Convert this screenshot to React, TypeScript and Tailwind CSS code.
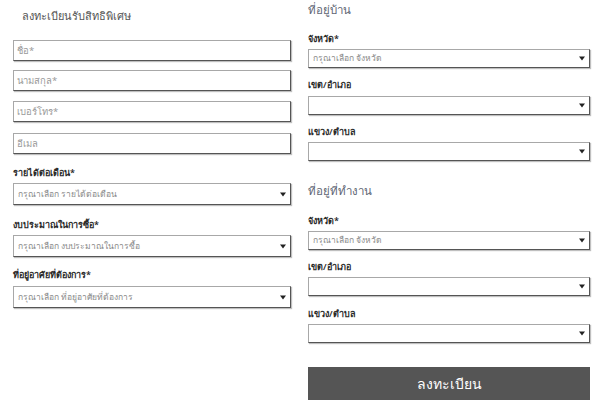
import React from 'react';

const font = "font-['Noto_Sans',sans-serif]";

function Arrow() {
  return (
    <svg width="6" height="5" viewBox="0 0 6 5" className="shrink-0">
      <path d="M0 0.5 L6 0.5 L3 4.5 Z" fill="#222" />
    </svg>
  );
}

function TextInput({ placeholder, className }: { placeholder: string; className: string }) {
  return (
    <div
      className={`flex items-center h-[21px] px-[3px] bg-white border border-[#a8a8a8] border-r-[#555] border-b-[#555] shadow-[1px_1px_1px_rgba(0,0,0,0.25)] ${className}`}
    >
      <span className="text-[9.5px] leading-none text-[#9a9a9a]">{placeholder}</span>
    </div>
  );
}

function Select({ value, h, className }: { value?: string; h: string; className: string }) {
  return (
    <div
      className={`flex items-center justify-between pl-[4px] pr-[4px] bg-white border border-[#a8a8a8] border-r-[#555] border-b-[#555] shadow-[1px_1px_1px_rgba(0,0,0,0.25)] ${h} ${className}`}
    >
      <span className="text-[8.5px] leading-none text-[#8a8a8a]">{value ?? ''}</span>
      <Arrow />
    </div>
  );
}

function Label({ text, className }: { text: string; className: string }) {
  return <div className={`h-[14px] text-[9px] leading-[14px] font-semibold text-[#2a2a2a] ${className}`}>{text}</div>;
}

function Heading({ text, className }: { text: string; className: string }) {
  return <div className={`h-[20px] text-[11.5px] leading-[20px] text-[#5f6675] ${className}`}>{text}</div>;
}

export default function App() {
  return (
    <div className={`w-[600px] h-[413px] bg-white flex ${font}`}>
      {/* Left column: personal info */}
      <div className="ml-[13px] w-[278px] flex flex-col">
        <div className="mt-[6px] ml-[9px] h-[20px] text-[11px] leading-[20px] text-[#555]">ลงทะเบียนรับสิทธิพิเศษ</div>
        <TextInput placeholder="ชื่อ*" className="mt-[14px]" />
        <TextInput placeholder="นามสกุล*" className="mt-[9px]" />
        <TextInput placeholder="เบอร์โทร*" className="mt-[10px]" />
        <TextInput placeholder="อีเมล" className="mt-[11px]" />

        <Label text="รายได้ต่อเดือน*" className="mt-[12px]" />
        <Select value="กรุณาเลือก รายได้ต่อเดือน" h="h-[22px]" className="mt-[3px]" />
        <Label text="งบประมาณในการซื้อ*" className="mt-[13px]" />
        <Select value="กรุณาเลือก งบประมาณในการซื้อ" h="h-[22px]" className="mt-[3px]" />
        <Label text="ที่อยู่อาศัยที่ต้องการ*" className="mt-[11px]" />
        <Select value="กรุณาเลือก ที่อยู่อาศัยที่ต้องการ" h="h-[22px]" className="mt-[4px]" />
      </div>

      {/* Right column: addresses */}
      <div className="ml-[17px] w-[282px] flex flex-col">
        <Heading text="ที่อยู่บ้าน" className="mt-0" />
        <Label text="จังหวัด*" className="mt-[12px]" />
        <Select value="กรุณาเลือก จังหวัด" h="h-[19px]" className="mt-[3px]" />
        <Label text="เขต/อำเภอ" className="mt-[10px]" />
        <Select h="h-[19px]" className="mt-[4px]" />
        <Label text="แขวง/ตำบล" className="mt-[10px]" />
        <Select h="h-[19px]" className="mt-[3px]" />

        <Heading text="ที่อยู่ที่ทำงาน" className="mt-[20px]" />
        <Label text="จังหวัด*" className="mt-[13px]" />
        <Select value="กรุณาเลือก จังหวัด" h="h-[19px]" className="mt-[3px]" />
        <Label text="เขต/อำเภอ" className="mt-[10px]" />
        <Select h="h-[19px]" className="mt-[3px]" />
        <Label text="แขวง/ตำบล" className="mt-[11px]" />
        <Select h="h-[19px]" className="mt-[3px]" />

        <button className="mt-[24px] h-[33px] w-full bg-[#555555] text-white text-[14px] leading-none">ลงทะเบียน</button>
      </div>
    </div>
  );
}
